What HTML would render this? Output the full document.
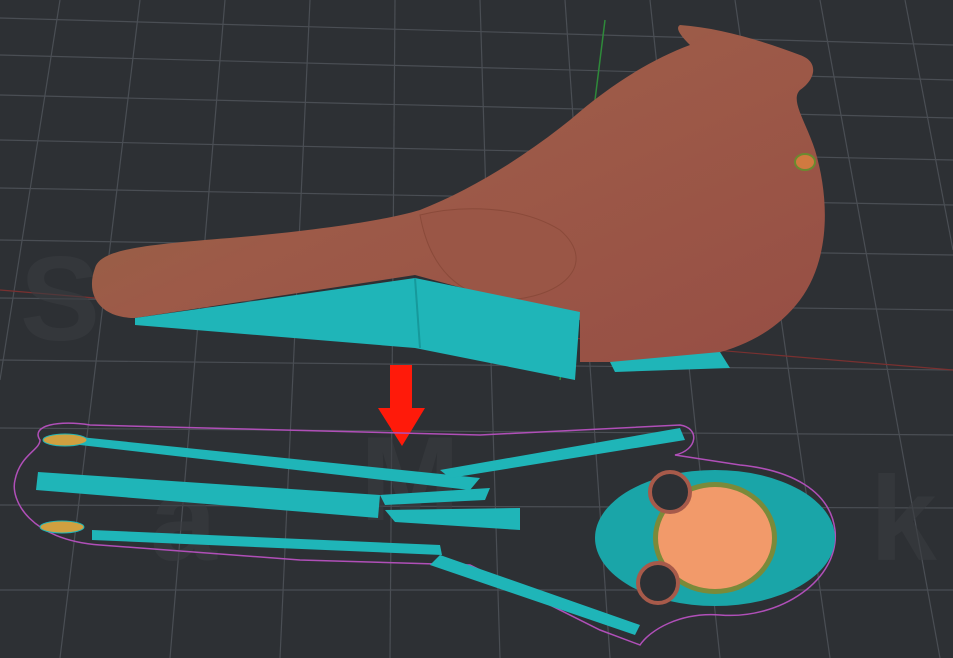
<!DOCTYPE html>
<html><head><meta charset="utf-8"><style>
html,body{margin:0;padding:0;background:#2d3034;overflow:hidden}
svg{display:block}
</style></head><body>
<svg width="953" height="658" viewBox="0 0 953 658" xmlns="http://www.w3.org/2000/svg">
<defs>
<linearGradient id="bird" x1="0" y1="0" x2="1" y2="1">
<stop offset="0" stop-color="#8f6a42"/><stop offset="0.45" stop-color="#9d5a48"/><stop offset="1" stop-color="#964e44"/>
</linearGradient>
</defs>
<rect width="953" height="658" fill="#2d3034"/>
<g stroke="#4a4e54" stroke-width="1.2" fill="none">
<line x1="0" y1="18" x2="953" y2="45"/>
<line x1="0" y1="55" x2="953" y2="80"/>
<line x1="0" y1="95" x2="953" y2="118"/>
<line x1="0" y1="140" x2="953" y2="160"/>
<line x1="0" y1="188" x2="953" y2="205"/>
<line x1="0" y1="240" x2="953" y2="255"/>
<line x1="0" y1="298" x2="953" y2="310"/>
<line x1="0" y1="360" x2="953" y2="370"/>
<line x1="0" y1="428" x2="953" y2="435"/>
<line x1="0" y1="505" x2="953" y2="508"/>
<line x1="0" y1="590" x2="953" y2="590"/>
<line x1="60" y1="0" x2="0" y2="380"/>
<line x1="140" y1="0" x2="60" y2="658"/>
<line x1="225" y1="0" x2="170" y2="658"/>
<line x1="310" y1="0" x2="280" y2="658"/>
<line x1="395" y1="0" x2="390" y2="658"/>
<line x1="480" y1="0" x2="500" y2="658"/>
<line x1="565" y1="0" x2="610" y2="658"/>
<line x1="650" y1="0" x2="720" y2="658"/>
<line x1="735" y1="0" x2="830" y2="658"/>
<line x1="820" y1="0" x2="940" y2="658"/>
<line x1="905" y1="0" x2="953" y2="250"/>
</g>
<line x1="605" y1="20" x2="560" y2="380" stroke="#2e8a3a" stroke-width="1.5"/>
<line x1="0" y1="290" x2="953" y2="370" stroke="#7a3030" stroke-width="1.2"/>
<g fill="#3a3d41" font-family="Liberation Sans, sans-serif" font-size="120" font-weight="bold" opacity="0.6">
<text x="20" y="340">S</text><text x="150" y="560">a</text><text x="360" y="520">M</text><text x="870" y="560">k</text>
</g>
<path d="M95,268 C100,250 140,245 230,238 C300,232 380,222 420,210 C470,190 520,160 570,120 C610,85 650,60 690,45 C680,35 675,28 680,25 C720,28 760,40 800,55 C820,62 815,80 800,90 C790,100 805,120 815,150 C830,200 830,260 800,300 C770,340 720,360 650,362 L580,362 L580,320 L415,275 L135,318 C100,318 85,295 95,268 Z" fill="url(#bird)"/>
<path d="M420,215 C460,205 520,205 560,230 C600,265 560,300 500,300 C460,295 430,270 420,215 Z" fill="#9a5646" stroke="#8a4a3a" stroke-width="1"/>
<ellipse cx="805" cy="162" rx="10" ry="8" fill="#d07a40" stroke="#6a8a30" stroke-width="2"/>
<path d="M135,318 L415,278 L580,312 L575,380 L415,348 L135,325 Z" fill="#1fb5b8"/>
<path d="M415,278 L420,348" stroke="#16999c" stroke-width="2"/>
<path d="M610,362 L720,352 L730,368 L615,372 Z" fill="#1fb5b8"/>
<rect x="390" y="365" width="22" height="45" fill="#ff1a0a"/>
<polygon points="378,408 425,408 402,446" fill="#ff1a0a"/>
<path d="M40,440 C30,425 60,420 90,425 L480,435 L680,425 C700,428 698,450 675,455 L740,465 C790,470 830,490 835,530 C840,580 780,620 720,615 C680,612 650,630 640,645 L600,630 L470,565 L300,560 L100,545 C30,540 10,500 15,480 C20,455 40,450 40,440 Z" fill="none" stroke="#b04fb8" stroke-width="1.5"/>
<g fill="#1fb5b8">
<polygon points="80,437 480,478 470,490 80,445"/>
<polygon points="38,472 380,495 378,518 36,490"/>
<polygon points="92,530 440,545 442,555 92,540"/>
<polygon points="440,470 680,428 685,440 450,478"/>
<polygon points="385,510 520,508 520,530 395,522"/>
<polygon points="440,555 640,625 635,635 430,565"/>
<polygon points="380,495 490,488 485,500 385,505"/>
</g>
<ellipse cx="65" cy="440" rx="22" ry="6" fill="#d0a040" stroke="#1fb5b8"/>
<ellipse cx="62" cy="527" rx="22" ry="6" fill="#d0a040" stroke="#1fb5b8"/>
<ellipse cx="715" cy="538" rx="120" ry="68" fill="#1aa5a8"/>
<ellipse cx="715" cy="538" rx="62" ry="56" fill="#7a8a3a"/>
<ellipse cx="715" cy="538" rx="57" ry="51" fill="#f29a6a"/>
<circle cx="670" cy="492" r="20" fill="#2d3034" stroke="#a75a4a" stroke-width="4"/>
<circle cx="658" cy="583" r="20" fill="#2d3034" stroke="#a75a4a" stroke-width="4"/>
</svg>
</body></html>
